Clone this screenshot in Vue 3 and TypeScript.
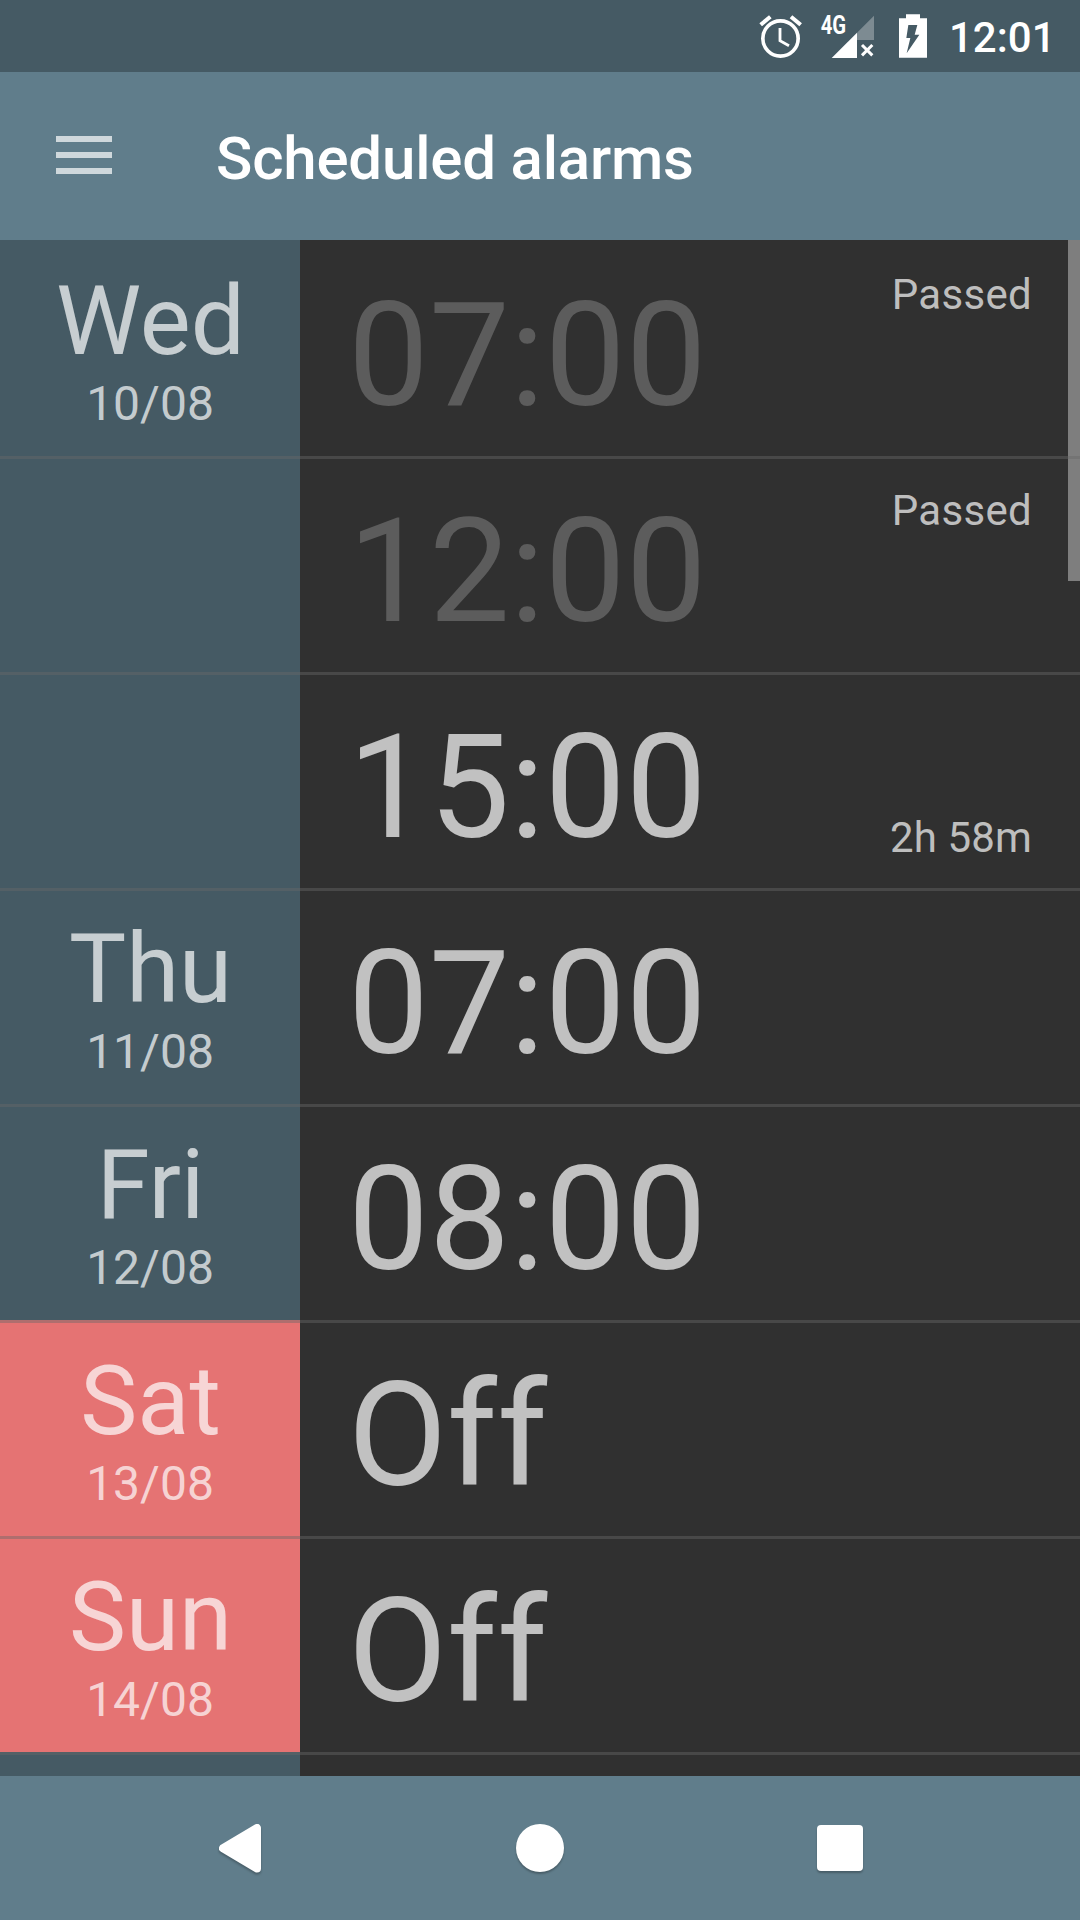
<script setup lang="ts">
interface AlarmRow {
  day?: string
  date?: string
  time?: string
  passed?: boolean
  remaining?: string
  weekend?: boolean
}

const rows: AlarmRow[] = [
  { day: 'Wed', date: '10/08', time: '07:00', passed: true },
  { time: '12:00', passed: true },
  { time: '15:00', remaining: '2h 58m' },
  { day: 'Thu', date: '11/08', time: '07:00' },
  { day: 'Fri', date: '12/08', time: '08:00' },
  { day: 'Sat', date: '13/08', time: 'Off', weekend: true },
  { day: 'Sun', date: '14/08', time: 'Off', weekend: true },
  {},
]
</script>

<template>
  <div class="screen">
    <div class="status">
      <svg class="alarm-icon" viewBox="54 36 135 144" fill="none" stroke="#fff">
        <circle cx="121.5" cy="115.5" r="53" stroke-width="11" />
        <path d="M62 74.500 91 50M153 50l29 24.500" stroke-width="12" />
        <path d="M120 84v38l27 15" stroke-width="8.500" />
      </svg>
      <svg class="signal-icon" viewBox="240 24 168 168">
        <text transform="translate(242 101) scale(.8 1)" font-size="76" font-weight="700" fill="#fff">4G</text>
        <path d="M402 47v73h-51V98z" fill="#fff" fill-opacity=".3" />
        <path d="M275 174l76-76v76z" fill="#fff" />
        <path d="M366 135l31 31M397 135l-31 31" stroke="#fff" stroke-width="9" />
      </svg>
      <svg class="battery-icon" viewBox="474 36 90 144">
        <path
          fill="#fff"
          fill-rule="evenodd"
          d="M498 43h42v12h21v118h-84V55h21zM505 75l-6 39h12l-11 46 38-56h-14l8-29z"
        />
      </svg>
      <span class="clock">12:01</span>
    </div>

    <header class="bar">
      <div class="menu"><i></i><i></i><i></i></div>
      <h1>Scheduled alarms</h1>
    </header>

    <main class="list">
      <div v-for="(row, i) in rows" :key="i" class="row">
        <div class="day" :class="{ weekend: row.weekend }">
          <div class="day-name">{{ row.day }}</div>
          <div class="day-date">{{ row.date }}</div>
        </div>
        <div class="body">
          <div class="time" :class="{ dim: row.passed }">{{ row.time }}</div>
          <div class="notes">
            <span v-if="row.passed" class="passed">Passed</span>
            <span v-if="row.remaining" class="remaining">{{ row.remaining }}</span>
          </div>
        </div>
      </div>
      <div class="scrollbar"></div>
    </main>

    <nav class="nav">
      <div class="key">
        <svg viewBox="0 0 48 52">
          <path d="M7 24.300 41 4v40.500z" />
        </svg>
      </div>
      <div class="key"><div class="home"></div></div>
      <div class="key"><div class="recent"></div></div>
    </nav>
  </div>
</template>

<style>
body {
  margin: 0;
  background: #303030;
}
</style>

<style scoped>
.screen {
  width: 1080px;
  height: 1920px;
  display: flex;
  flex-direction: column;
  overflow: hidden;
  background: #303030;
  font-family: Roboto, 'Liberation Sans', sans-serif;
}

.status {
  height: 72px;
  flex: none;
  display: flex;
  align-items: center;
  padding-left: 758px;
  background: #455a64;
}
.status svg {
  height: 48px;
  flex: none;
}
.alarm-icon {
  width: 45px;
}
.status .signal-icon {
  width: 56px;
  height: 56px;
  margin-left: 17px;
}
.battery-icon {
  width: 30px;
  margin-left: 22px;
}
.clock {
  margin-left: 21px;
  padding-top: 3px;
  font-size: 42px;
  font-weight: 500;
  line-height: 50px;
  color: #fff;
}

.bar {
  height: 168px;
  flex: none;
  display: flex;
  align-items: center;
  background: #607d8b;
}
.menu {
  width: 56px;
  margin: 0 104px 2px 56px;
  display: flex;
  flex-direction: column;
  gap: 10px;
}
.menu i {
  height: 6px;
  background: #cfd8dc;
}
h1 {
  margin: 0;
  padding-top: 6px;
  font-size: 60px;
  font-weight: 500;
  line-height: 70px;
  letter-spacing: -0.19px;
  color: #fff;
}

.list {
  position: relative;
  height: 1536px;
  flex: none;
  overflow: hidden;
}
.row {
  position: relative;
  height: 216px;
  display: flex;
  color: rgba(255, 255, 255, 0.7);
}
.row + .row::before {
  content: '';
  position: absolute;
  z-index: 2;
  top: 0;
  left: 0;
  right: 0;
  height: 3px;
  background: rgba(104, 104, 104, 0.43);
}
.day {
  width: 300px;
  flex: none;
  box-sizing: border-box;
  padding-top: 26px;
  text-align: center;
  background: #455a64;
}
.day.weekend {
  background: #e57373;
}
.day-name {
  font-size: 96px;
  line-height: 110px;
  text-indent: 1px;
}
.day-date {
  font-size: 48px;
  line-height: 56px;
}
.body {
  flex: 1;
  display: flex;
  justify-content: space-between;
  padding: 0 48px;
}
.time {
  padding-top: 30px;
  font-size: 144px;
  line-height: 172px;
}
.time.dim {
  color: #5c5c5c;
}
.notes {
  display: flex;
  flex-direction: column;
  padding: 30px 0 25px;
  font-size: 42px;
  line-height: 50px;
}
.passed {
  letter-spacing: 0.3px;
}
.remaining {
  margin-top: auto;
  letter-spacing: 0.15px;
}
.scrollbar {
  position: absolute;
  z-index: 1;
  top: 0;
  right: 0;
  width: 12px;
  height: 341px;
  background: #7e7e7e;
}

.nav {
  height: 144px;
  flex: none;
  display: flex;
  padding: 0 90px;
  box-sizing: border-box;
  background: #607d8b;
}
.key {
  flex: 1;
  display: flex;
  align-items: center;
  justify-content: center;
}
.key svg {
  width: 48px;
  height: 52px;
  margin-top: 4px;
  overflow: visible;
  filter: drop-shadow(0 2px 1px rgba(0, 0, 0, 0.25));
}
.key path {
  fill: #fff;
  stroke: #fff;
  stroke-width: 8px;
  stroke-linejoin: round;
}
.home {
  width: 48px;
  height: 48px;
  border-radius: 50%;
  background: #fff;
  box-shadow: 0 2px 2px rgba(0, 0, 0, 0.25);
}
.recent {
  width: 45.4px;
  height: 45.4px;
  border-radius: 4px;
  background: #fff;
  box-shadow: 0 2px 2px rgba(0, 0, 0, 0.25);
}
</style>
